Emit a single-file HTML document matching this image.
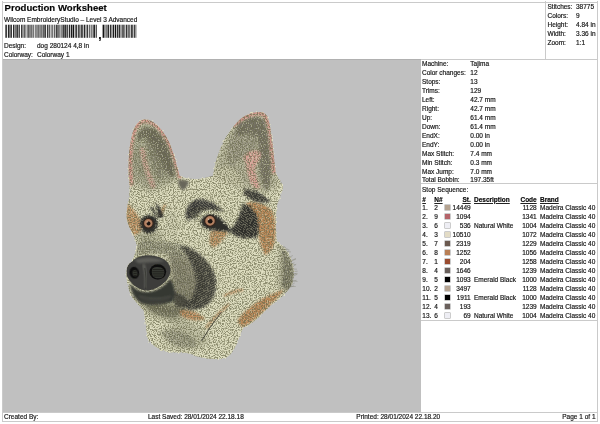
<!DOCTYPE html>
<html><head><meta charset="utf-8"><title>Production Worksheet</title>
<style>
html,body{margin:0;padding:0;background:#fff;}
body{will-change:transform;width:600px;height:424px;position:relative;overflow:hidden;font-family:"Liberation Sans",Arial,sans-serif;font-size:6.5px;color:#111;line-height:9px;-webkit-text-stroke:0.18px #222;}
.abs{position:absolute;white-space:nowrap;}
.ln{position:absolute;background:#cacaca;}
#title{left:4.6px;top:2.2px;font-size:9.6px;font-weight:bold;line-height:12px;color:#000;}
#gray{left:3px;top:59px;width:417.5px;height:353px;background:#c0c0c0;border-top:1px solid #b0b0b0;box-sizing:border-box;}
.row{position:absolute;left:0;height:9px;line-height:9px;white-space:nowrap;}
.row span{position:absolute;top:0;}
u{text-decoration:underline;}
</style></head><body>
<!-- frame lines -->
<div class="ln" style="left:2px;top:2px;width:596px;height:1px"></div>
<div class="ln" style="left:2px;top:1px;width:1px;height:421px"></div>
<div class="ln" style="left:597px;top:1px;width:1px;height:421px"></div>
<div class="ln" style="left:2px;top:421px;width:596px;height:1px"></div>
<div class="ln" style="left:2px;top:59px;width:596px;height:1px"></div>
<div class="ln" style="left:545px;top:1px;width:1px;height:59px"></div>
<div class="ln" style="left:2px;top:412px;width:596px;height:1px"></div>
<div class="ln" style="left:420px;top:183px;width:178px;height:1px"></div>
<div class="ln" style="left:420px;top:320px;width:178px;height:1px"></div>

<div id="gray" class="abs"></div>
<!--DOG-START-->
<svg class="abs" style="left:0;top:0" width="600" height="424" viewBox="0 0 600 424">
<defs>
<filter id="rough" x="-5%" y="-5%" width="110%" height="110%">
  <feTurbulence type="fractalNoise" baseFrequency="0.5" numOctaves="2" seed="3" result="n"/>
  <feDisplacementMap in="SourceGraphic" in2="n" scale="3.5" xChannelSelector="R" yChannelSelector="G"/>
</filter>
<filter id="rough2" x="-10%" y="-10%" width="120%" height="120%">
  <feGaussianBlur stdDeviation="0.9" result="bl"/>
  <feTurbulence type="fractalNoise" baseFrequency="0.6" numOctaves="2" seed="8" result="n"/>
  <feDisplacementMap in="bl" in2="n" scale="4" xChannelSelector="R" yChannelSelector="G"/>
</filter>
<filter id="b05" x="-20%" y="-20%" width="140%" height="140%"><feGaussianBlur stdDeviation="0.45"/></filter>
<filter id="b1" x="-20%" y="-20%" width="140%" height="140%"><feGaussianBlur stdDeviation="0.8"/></filter>
<filter id="b2" x="-20%" y="-20%" width="140%" height="140%"><feGaussianBlur stdDeviation="1.6"/></filter>
<filter id="b3" x="-30%" y="-30%" width="160%" height="160%"><feGaussianBlur stdDeviation="3"/></filter>
<filter id="b5" x="-30%" y="-30%" width="160%" height="160%"><feGaussianBlur stdDeviation="5"/></filter>
<filter id="tex" x="0" y="0" width="100%" height="100%">
  <feTurbulence type="fractalNoise" baseFrequency="0.75" numOctaves="2" seed="11"/>
  <feColorMatrix type="matrix" values="0 0 0 0 0.25  0 0 0 0 0.25  0 0 0 0 0.15  1.8 0 0 0 -0.72"/>
</filter>
<filter id="texl" x="0" y="0" width="100%" height="100%">
  <feTurbulence type="fractalNoise" baseFrequency="0.85" numOctaves="2" seed="23"/>
  <feColorMatrix type="matrix" values="0 0 0 0 0.93  0 0 0 0 0.92  0 0 0 0 0.8  0 1.8 0 0 -0.74"/>
</filter>
<pattern id="st2" width="4" height="3.200" patternUnits="userSpaceOnUse" patternTransform="rotate(-8)">
  <path d="M-0.2,2.200 L2,3.900 L4.200,2.200 M-0.2,-1 L2,0.700 L4.200,-1" fill="none" stroke="#ecebcf" stroke-width="0.900"/>
</pattern>
<pattern id="st" width="4" height="3.200" patternUnits="userSpaceOnUse" patternTransform="rotate(-8)">
  <path d="M-0.2,0.600 L2,2.300 L4.200,0.600" fill="none" stroke="#6a6a4c" stroke-width="1.150"/>
</pattern>
<filter id="spk" x="0" y="0" width="100%" height="100%" color-interpolation-filters="sRGB">
  <feTurbulence type="fractalNoise" baseFrequency="0.75 0.85" numOctaves="1" seed="4"/>
  <feColorMatrix type="matrix" values="0 0 0 0 0.416  0 0 0 0 0.416  0 0 0 0 0.298  7 0 0 0 -3.15"/>
</filter>
<filter id="spl" x="0" y="0" width="100%" height="100%" color-interpolation-filters="sRGB">
  <feTurbulence type="fractalNoise" baseFrequency="0.8 0.7" numOctaves="1" seed="19"/>
  <feColorMatrix type="matrix" values="0 0 0 0 0.86  0 0 0 0 0.86  0 0 0 0 0.74  0 7 0 0 -3.75"/>
</filter>
<filter id="wob" x="0" y="0" width="100%" height="100%">
  <feTurbulence type="fractalNoise" baseFrequency="0.09" numOctaves="2" seed="5" result="n"/>
  <feDisplacementMap in="SourceGraphic" in2="n" scale="9" xChannelSelector="R" yChannelSelector="G"/>
</filter>
<pattern id="h1" width="2.100" height="8" patternUnits="userSpaceOnUse" patternTransform="rotate(62)">
  <rect x="0" y="0" width="0.750" height="8" fill="#a9a78d"/>
</pattern>
<pattern id="h2" width="2.100" height="8" patternUnits="userSpaceOnUse" patternTransform="rotate(-55)">
  <rect x="0" y="0" width="0.700" height="8" fill="#a9a78d"/>
</pattern>
<pattern id="h3" width="1.900" height="8" patternUnits="userSpaceOnUse" patternTransform="rotate(8)">
  <rect x="0" y="0" width="0.700" height="8" fill="#3a3a33"/>
</pattern>
<filter id="rough3" x="-10%" y="-10%" width="120%" height="120%">
  <feTurbulence type="fractalNoise" baseFrequency="0.5" numOctaves="2" seed="14" result="n"/>
  <feDisplacementMap in="SourceGraphic" in2="n" scale="3" xChannelSelector="R" yChannelSelector="G"/>
</filter>
<path id="head" d="M142.500,119.800 C148,118.500 151.500,120.800 154.500,123 C158.500,126 161.800,130 164.500,134 C167.800,139 170.500,144.500 172,150 C174,155 175.600,160 176.500,165 C178,169 178.800,172.500 179.400,175.800 C185,178.500 191,179.300 197,179 C203,178.500 208,177.300 213,175.800 C214,168 216,160 219,152 C221.500,145 224.500,139 228.600,133.300 C232,128 236,123 240.400,119 C244,116 248,114 252,113 C255,112.200 258.500,111.800 261.600,112 C264.500,112.800 266.300,114.500 267.500,116.800 C269.300,122 270.300,127.500 271,133 C272,139.500 272.900,146 273.400,152 C274.200,159 275,166.500 275.800,173.400 C277,176.200 279,178.300 280.500,180.500 C282,183.500 283,187 282.500,190 C281,195 278.500,200 277,205 C276,212 275.800,218 276,225 C276,231 276.200,236 276.700,241 C280.500,244 284.500,248 287.400,252 C290.500,257 292.500,263 293.600,268.700 C294.300,274 293.600,279 292,284 C289.500,288.500 286.500,292.500 282.800,296 C279,299 275,302 271,305.500 C267,309 263,313 259,317 C255,321 250,324.500 243.400,327.500 C242,330 241.300,332 240.600,334 C239.700,336.500 238.700,339 237.700,341.600 C236.300,345 234.800,348 233,351 C231.500,353.500 228.500,357 225,358 C220,359.300 215.500,359.300 211,359 C205.500,358.300 200,357.300 195,356 C192,354.500 189.500,353.500 187,353 C181,352.500 175,352.800 169,352.400 C164.500,351.500 160.500,350 157,348 C153.500,345.800 150.500,343.200 148,340 C146.800,335.500 146.300,330.500 146,326 C145.300,321.500 144.600,316.500 144,312 C143.700,311 143.300,310.200 143,309.500 C140.500,307.500 138.500,305.300 137,303 C134.500,300.500 132.500,298 131,295 C129.500,292 128.500,288.500 128,285 C126.500,281 126.200,277 126.600,273 C126.500,269 127,267 128,265 C129.500,263 131,262 133,261 C133,259.500 133.400,258 133.900,256.700 C135,253.500 136.300,250.300 137.400,247 C136,242.500 134.500,237.500 132.700,233 C130,229 127.800,224 126.800,219 C126.300,213.500 127,208 128,202.500 C128.800,198.500 129.400,194.500 129.600,190.700 C129.500,187 129.200,183.500 129,180 C128.500,175.500 128.300,171.500 128.500,167 C128.500,160.500 128.800,154 129.600,148 C130.500,141 131.800,134.500 133.800,129 C136,124.500 139,121 142.500,119.800 Z"/>
<clipPath id="hc"><use href="#head"/></clipPath>
</defs>

<!-- base fur -->
<g filter="url(#rough)">
  <use href="#head" fill="#e1e0c3"/>
</g>
<g clip-path="url(#hc)">
  <!-- mid olive shading -->
  <g filter="url(#b3)" fill="#8c8b76">
    <!-- left ear overall -->
    <path d="M143,121 C153,120 166,133 173,150 C177,160 179,170 179,178 C172,184 160,186 152,190 C146,180 138,172 131,176 C128,160 130,135 143,121 Z" opacity="0.7"/>
    <path d="M131,150 C136,146 142,150 146,160 C150,170 153,182 153,192 C146,190 138,186 131,184 C129.500,172 129.500,160 131,150 Z" opacity="0.55"/>
    <!-- right ear overall -->
    <path d="M261,113 C268,118 271,135 273,152 C274,165 276,178 278,186 C270,192 256,192 246,188 C236,186 224,182 214,174 C216,160 222,142 232,128 C240,118 252,112 261,113 Z" opacity="0.55"/>
    <!-- muzzle bridge -->
    <path d="M136,246 C146,240 166,240 182,246 C192,250 200,256 204,262 C196,262 184,258 170,256 C158,254 146,254 134,258 Z" opacity="0.5"/>
    <!-- whisker area between nose and crescent -->
    <path d="M168,258 C180,256 198,268 202,284 C204,296 196,304 184,306 C176,300 170,292 170,282 Z" opacity="0.6"/>
    <!-- under lip -->
    <path d="M140,302 C152,300 172,302 186,308 C184,316 176,320 166,318 C156,316 146,312 140,302 Z" opacity="1" fill="#77765f"/>
    <path d="M160,306 C174,308 192,318 210,340 C204,348 196,350 190,346 C182,334 170,322 158,314 Z" opacity="0.4"/>
    <!-- left of mouth -->
    <path d="M127,284 C132,286 138,294 142,304 C136,304 128,296 127,284 Z" opacity="0.7"/>
    <!-- neck hatch -->
    <path d="M160,332 C172,324 190,330 198,346 C188,352 168,350 160,332 Z" opacity="0.55"/>
    <!-- right cheek edge -->
    <path d="M279,247 C290,253 297,270 294,287 C288,294 281,292 279,283 C281,271 281,258 279,247 Z" opacity="0.8" fill="#7a7965"/>
    <!-- left face under eye -->
    <path d="M136,230 C146,235 158,235 166,229 C164,240 150,245 138,242 Z" opacity="0.7"/>
    <!-- forehead between eyes faint -->
    <path d="M170,205 C176,215 178,228 176,240 C170,236 166,222 170,205 Z" opacity="0.25"/>
  </g>
  <!-- darker ear cores -->
  <g filter="url(#b2)" fill="#5a564b">
    <path d="M137,136 C141,128 149,126 156,130 C163,136 168,146 171,156 C174,164 175,172 174,177 C169,178 165,172 162,164 C158,154 153,144 147,139 C143,136 140,138 138,142 Z" opacity="0.8"/>
    <path d="M146,140 C152,142 158,152 162,164 C164,172 164,178 160,180 C156,174 152,164 150,156 C148,150 146,146 146,140 Z" opacity="0.45"/>
    <path d="M238,123 C247,116 258,115 264.500,120 C268,128 269.500,140 270.500,152 C271.500,166 271.500,180 268,191 C263.500,189 261,181 260,171 C259,159 260,147 257,139 C253,133 246,132 240,135 C235,137 234,129 238,123 Z" opacity="0.7"/>
    <path d="M232,134 C240,128 250,130 256,138 C258,146 254,152 248,154 C242,158 236,164 230,168 C226,160 227,144 232,134 Z" opacity="0.3"/>
  </g>
  <!-- light zones in ears -->
  <g filter="url(#b2)" fill="#cfcdb0">
    
    <path d="M214,176 C217,168 222,164 228,166 C236,170 242,178 244,188 C234,186 223,182 214,176 Z" opacity="0.8"/>
  </g>
  <!-- pink -->
  <g filter="url(#b1)" fill="none" stroke="#d48f86" stroke-linecap="round">
    <path d="M131.500,184 C129.500,170 129.800,150 132.500,137 C135,127 138.500,121.800 143.500,120.800 C151,120.300 159,126.500 165,135.500 C170,143.500 174,154 176.500,164 C178,169 179,173 179.500,177" stroke-width="3.600"/>
    <path d="M142.500,150 C144,162 148,174 153,186" stroke-width="5" opacity="0.75" stroke="#d8a197"/>
    <path d="M234,125 C241,118 251,113.500 261,113 C266,114.500 268.500,120 270,130 C271.500,142 272.500,156 274,172" stroke-width="3.800" stroke="#d08f86"/>
  </g>
  <g filter="url(#b1)" fill="#d9a197">
    <path d="M243.500,158 C246,152 253,149.500 260,151.500 C261.500,155 260.500,160 257,163 C255,166 254.500,171 256,176 C257.500,181 259,185 260,189 C256,189.500 252,186 250,181 C247.500,175 246.500,169 246,164 C245.500,161.500 244.500,160 243.500,158 Z"/>
  </g>
  <!-- tan patches -->
  <g filter="url(#b1)" fill="#bd8858">
    <path d="M246,203 C254,200 266,204 273,212 C276,222 276,234 274,244 C272,250 268,254 265,255 C262,250 260,244 259,238 C258,230 257,224 254,218 C251,212 247,208 246,203 Z"/>
    <path d="M211,231 C216,229.500 223,230.500 228,232 C225,238 220,243.500 214,247.500 C210.500,246.500 209,242 209.500,238 Z" opacity="0.9"/>
    <path d="M127,203 C131,206 135,211 138,216 C141,220 143,225 142,229 C140,233 136,235.500 132,235.500 C128,231 125.500,222 126,212 C126.200,209 126.500,206 127,203 Z" opacity="0.85"/>
    <path d="M284,290 C279,297 272,303 266,309 C260,315 253,321 244,327 C241,327 238,324 238,320 C243,312 252,305 262,299 C270,295 278,291 284,290 Z"/>
    <path d="M180,310 C190,309 200,313 205,319 C198,322 188,320 180,315 Z" opacity="0.95"/>
    <path d="M166,203 C165.500,208 163,213 161,216 L159.500,214.500 C161,209 163,205 166,203 Z" opacity="0.9"/>
  </g>
  <g filter="url(#b1)" fill="none" stroke="#bb8656" stroke-width="2.300" opacity="0.95">
    <path d="M224,296 C232,292 238,290 243,290"/>
    <path d="M206,328 C212,320 220,312 229,304"/>
  </g>
  <!-- texture -->
  <rect x="112" y="100" width="200" height="270" filter="url(#spk)" opacity="0.7"/>
  <rect x="112" y="100" width="200" height="270" filter="url(#spl)" opacity="0.5"/>
  <rect x="120" y="105" width="185" height="260" filter="url(#tex)" opacity="0.15"/>
  <path d="M201.500,341 C207,332 213,323 221.500,312" stroke="#2c2c28" stroke-width="0.900" fill="none" opacity="0.85"/>
  <!-- dark patches -->
  <!-- zone between nose and crescent -->
  <g filter="url(#b3)">
    <path d="M166,256 C180,250 200,262 206,280 C208,294 198,306 184,308 C176,302 170,292 170,282 C172,272 170,264 166,256 Z" fill="#66654f" opacity="0.35"/>
    <path d="M137,246 C150,242 170,243 184,248 C176,253 160,253 150,253 C144,253 139,253 135,255 Z" fill="#6f6e58" opacity="0.12"/>
  </g>
  <g filter="url(#rough2)" fill="#2f2f2b">
    <!-- right eyebrow -->
    <path d="M185.500,218 C185,208 190,201 198,199.500 C207,199 216,203 224,212 C218,210 212,209.500 206,210 C199,210.500 193,214 190,221 Z" opacity="0.9"/>
    <!-- around right eye -->
    <path d="M201,220 C204,213.500 214,212.500 219,217 C223,221 228,226.500 233,231.500 C226,231.500 216,230.500 208,229.200 C203,227.500 200,224 201,220 Z"/>
    <path d="M188,213 C192,207 200,205 208,207 C204,210 199,214 197,219 C194,220 190,218 188,213 Z" opacity="0.55"/>
    <!-- crescent right of right eye -->
    <path d="M243,204 C249,204.500 255,210 257.500,218 C259,226 259,233 257,236.500 C251,239 242,238.500 236,236 C233,234.500 231,232.500 230.500,230.500 C234,226 237,221 239,216 C240.500,211.500 241.500,207.500 243,204 Z"/>
    <!-- ear base right -->
    <path d="M244,189 C253,189 263,194 270.500,201.500 C262,204.500 251,201 244,195 Z" opacity="0.92"/>
    <!-- left eye surround -->
    <path d="M140.500,221 C143,213.500 153,213 156.800,219.500 C159.500,225.500 156,232.500 149,233.200 C143,233 138.800,228 140.500,221 Z"/>
    <path d="M155.500,202 C159.500,207 162.300,212 163.500,217 L158.500,218.500 C157.800,213 156.800,208 155.500,202 Z"/>
    <path d="M151,207 C153.500,210.500 155,213 156,216" stroke="#2f2f2b" stroke-width="2" fill="none"/>
    <!-- muzzle crescent -->
    <path d="M180,245.500 C192,246.500 206,257 213,271 C218.500,284 216,298 207,305 C200,310.500 190,311 183,307 C191,300 196.500,292 196.500,282 C196,269 188,257 180,245.500 Z" opacity="0.88"/>
    <path d="M171,290 C177,292 184,296 190,302 C188,307 182,309 176,307 C173,302 171,296 171,290 Z" opacity="0.7"/>
  </g>
  <g filter="url(#rough3)" opacity="0.55">
    <path d="M180,245.500 C192,246.500 206,257 213,271 C218.500,284 216,298 207,305 C200,310.500 190,311 183,307 C191,300 196.500,292 196.500,282 C196,269 188,257 180,245.500 Z" fill="url(#h1)"/>
    <path d="M243,204 C249,204.500 255,210 257.500,218 C259,226 259,233 257,236.500 C251,239 242,238.500 236,236 C233,234.500 231,232.500 230.500,230.500 C234,226 237,221 239,216 C240.500,211.500 241.500,207.500 243,204 Z" fill="url(#h2)"/>
    <path d="M244,189 C253,189 263,194 270.500,201.500 C262,204.500 251,201 244,195 Z" fill="url(#h2)"/>
    <path d="M185.500,218 C185,208 190,201 198,199.500 C207,199 216,203 224,212 C218,210 212,209.500 206,210 C199,210.500 193,214 190,221 Z" fill="url(#h2)"/>
  </g>
  <!-- dark hatch fringes -->
  <g filter="url(#rough3)" opacity="0.7">
    <path d="M168,254 C180,250 196,258 204,272 C208,286 202,300 190,306 C182,302 176,294 174,284 C174,272 172,262 168,254 Z" fill="url(#h3)" opacity="0.55"/>
    <path d="M138,243 C150,239 170,240 184,246 L182,256 C170,252 150,252 136,256 Z" fill="url(#h3)" opacity="0.6"/>
    <path d="M281,249 C290,255 296,270 293,286 C289,292 284,291 282,284 C284,272 284,260 281,249 Z" fill="url(#h3)" opacity="0.8"/>
    <path d="M144,304 C154,302 172,304 184,309 C182,316 174,319 166,317 C156,315 148,311 144,304 Z" fill="url(#h3)" opacity="0.5"/>
    <path d="M161,332 C172,326 190,332 197,345 C188,350 170,348 161,332 Z" fill="url(#h3)" opacity="0.5"/>
  </g>
  <g filter="url(#b1)">
    <!-- forehead spot -->
    <path d="M178,180.500 C182,179.500 187,180.500 189,182 C187.500,186 185,189.500 182.500,190.500 C180,188 178,184.500 178,180.500 Z" fill="#67665a"/>
  </g>
  <!-- mouth -->
  <g filter="url(#b1)">
    <path d="M130,283 C134,289 140,292 148,292 C156,291 164,287 170.500,279 C175,286 176,295 173,301.500 C164,305.500 150,305.500 142,303.500 C136,300.500 131,293 130,283 Z" fill="#363732"/>
    <path d="M139,296.500 C150,299.500 160,299.500 171,296.500" stroke="#676861" stroke-width="0.900" fill="none" opacity="0.8"/>
    <path d="M141,300 C150,302.500 160,302.500 169,300" stroke="#676861" stroke-width="0.700" fill="none" opacity="0.6"/>
  </g>
  <!-- nose -->
  <g>
    <path filter="url(#b05)" d="M126.300,272 C126.300,267 128.500,263.500 131.700,261.200 C135.500,258 140.500,255.600 146,255.200 C152,254.800 158,256.200 162.700,258.600 C167,261 170.300,265 170.600,269.600 C170.800,274.500 168.200,279 164.500,282.600 C160,286.600 154.500,289.800 148.500,290.600 C143,290.800 138,288.600 134.200,285.400 C131.500,283.400 129.600,281 128.400,278.600 C127,276.600 126.400,274.400 126.300,272 Z" fill="#3d3e3a"/>
    <path filter="url(#b1)" d="M134,260 C143,256.300 156,256.500 165,261 C159,262.500 148,262.300 139,263.500 Z" fill="#676862" opacity="0.8"/>
    <ellipse cx="134.300" cy="272.700" rx="4.800" ry="6" fill="#0e0f0c" filter="url(#b05)" transform="rotate(-12 134.300 272.700)"/>
    <ellipse cx="157.800" cy="271.800" rx="8.400" ry="7.600" fill="#0e0f0c" filter="url(#b05)"/>
    <ellipse cx="135" cy="273.300" rx="2.500" ry="3.300" fill="#33342f" filter="url(#b05)" transform="rotate(-12 135 273.300)"/>
    <path d="M152.500,268.500 C155.500,266.300 161.500,266.500 163.800,269.500 C165,272 164.500,275.500 162.300,277.500 C158.500,279 154.500,278.500 152.800,276 C151.500,273.800 151.500,270.800 152.500,268.500 Z" fill="#363732" filter="url(#b05)"/>
    <path d="M152.800,269.500 h11 M152.300,271.700 h12 M152.500,273.900 h11.600 M153.500,276.100 h9 M133.500,271.500 h3 M133.500,273.500 h3.200 M134,275.500 h2.400" stroke="#1a1b16" stroke-width="0.750" fill="none" opacity="0.9"/>
    <path filter="url(#b1)" d="M143.500,264 C145.500,271 146.500,280 145.800,288.500" stroke="#73746d" stroke-width="2.400" fill="none" opacity="0.75"/>
    <path d="M144.800,268 C146,275 146.300,282 145.800,289" stroke="#23241f" stroke-width="0.700" fill="none" opacity="0.8"/>
  </g>
  <!-- eyes -->
  <g>
    <circle cx="148.300" cy="223.300" r="4.900" fill="#a8775a"/>
    <circle cx="148.300" cy="223.300" r="4.900" fill="none" stroke="#33261e" stroke-width="1.300"/>
    <circle cx="148.300" cy="223.300" r="2.900" fill="none" stroke="#cf9a76" stroke-width="0.800" opacity="0.5"/>
    <circle cx="148.600" cy="223.500" r="1.900" fill="#1c1410"/>
    <circle cx="210" cy="220.900" r="5.500" fill="#aa795b"/>
    <circle cx="210" cy="220.900" r="5.500" fill="none" stroke="#33261e" stroke-width="1.400"/>
    <circle cx="210" cy="220.900" r="3.500" fill="none" stroke="#cf9a76" stroke-width="0.900" opacity="0.5"/>
    <circle cx="210.200" cy="221.200" r="2.300" fill="#1c1410"/>
    <circle cx="208.600" cy="219.200" r="0.800" fill="#f0d8c0" opacity="0.8"/>
    <circle cx="147.200" cy="221.900" r="0.700" fill="#f0d8c0" opacity="0.8"/>
  </g>
</g>
<!-- fringe -->
<path d="M278.6,248.3 L285.9,247.4 M277.1,246.9 L284.9,246.7 M282.3,248.8 L289.4,249.8 M281.6,250.2 L287.5,248.8 M284.1,254.2 L289.0,250.8 M285.1,251.9 L291.0,251.9 M285.5,258.1 L291.3,257.4 M287.5,258.1 L292.9,255.5 M288.6,261.5 L295.9,258.6 M288.9,262.4 L296.0,259.0 M289.5,264.0 L295.7,264.6 M289.4,265.3 L294.4,262.6 M290.3,268.4 L296.2,264.3 M290.2,268.9 L296.9,269.2 M292.0,271.6 L297.6,271.2 M290.0,273.9 L297.6,273.7 M289.8,275.6 L296.4,273.4 M290.2,277.8 L297.2,274.2 M289.7,280.6 L297.5,281.5 M289.2,281.7 L296.5,280.3 M288.1,286.3 L295.7,286.5 M289.2,286.3 L294.7,283.0 M286.6,288.4 L293.9,285.8 M285.7,287.9 L291.2,285.8" stroke="#6b6a56" stroke-width="0.600" fill="none" opacity="0.5"/>
</svg>
<!--DOG-END-->

<div id="title" class="abs">Production Worksheet</div>
<div class="abs" style="left:4px;top:14.5px">Wilcom EmbroideryStudio – Level 3 Advanced</div>
<!--BARCODE--><svg class="abs" style="left:0;top:0" width="150" height="45" viewBox="0 0 150 45"><rect x="5.40" y="24.7" width="1.40" height="13.1" fill="#111"/><rect x="7.90" y="24.7" width="1.70" height="13.1" fill="#262626"/><rect x="10.30" y="24.7" width="1.70" height="13.1" fill="#3a3a3a"/><rect x="13.10" y="24.7" width="1.00" height="13.1" fill="#111"/><rect x="14.60" y="24.7" width="1.00" height="13.1" fill="#1c1c1c"/><rect x="16.30" y="24.7" width="1.70" height="13.1" fill="#3a3a3a"/><rect x="18.50" y="24.7" width="1.40" height="13.1" fill="#3a3a3a"/><rect x="21.00" y="24.7" width="1.00" height="13.1" fill="#3a3a3a"/><rect x="22.50" y="24.7" width="0.80" height="13.1" fill="#1c1c1c"/><rect x="23.80" y="24.7" width="1.00" height="13.1" fill="#3a3a3a"/><rect x="25.50" y="24.7" width="0.80" height="13.1" fill="#333"/><rect x="27.40" y="24.7" width="1.40" height="13.1" fill="#3a3a3a"/><rect x="29.50" y="24.7" width="1.00" height="13.1" fill="#111"/><rect x="31.40" y="24.7" width="0.80" height="13.1" fill="#111"/><rect x="32.70" y="24.7" width="1.00" height="13.1" fill="#3a3a3a"/><rect x="34.80" y="24.7" width="0.80" height="13.1" fill="#333"/><rect x="36.50" y="24.7" width="1.00" height="13.1" fill="#1c1c1c"/><rect x="38.40" y="24.7" width="0.80" height="13.1" fill="#111"/><rect x="39.70" y="24.7" width="0.80" height="13.1" fill="#111"/><rect x="41.40" y="24.7" width="0.80" height="13.1" fill="#1c1c1c"/><rect x="42.70" y="24.7" width="1.00" height="13.1" fill="#1c1c1c"/><rect x="44.40" y="24.7" width="1.40" height="13.1" fill="#111"/><rect x="46.90" y="24.7" width="1.40" height="13.1" fill="#3a3a3a"/><rect x="48.80" y="24.7" width="1.00" height="13.1" fill="#333"/><rect x="50.70" y="24.7" width="0.80" height="13.1" fill="#333"/><rect x="52.40" y="24.7" width="0.80" height="13.1" fill="#1c1c1c"/><rect x="54.30" y="24.7" width="1.00" height="13.1" fill="#1c1c1c"/><rect x="56.00" y="24.7" width="0.80" height="13.1" fill="#111"/><rect x="57.30" y="24.7" width="1.40" height="13.1" fill="#3a3a3a"/><rect x="59.40" y="24.7" width="1.00" height="13.1" fill="#3a3a3a"/><rect x="61.50" y="24.7" width="1.00" height="13.1" fill="#111"/><rect x="63.20" y="24.7" width="1.40" height="13.1" fill="#111"/><rect x="65.10" y="24.7" width="1.40" height="13.1" fill="#1c1c1c"/><rect x="67.20" y="24.7" width="1.00" height="13.1" fill="#1c1c1c"/><rect x="69.10" y="24.7" width="1.00" height="13.1" fill="#111"/><rect x="70.80" y="24.7" width="1.70" height="13.1" fill="#1c1c1c"/><rect x="73.00" y="24.7" width="1.00" height="13.1" fill="#111"/><rect x="74.70" y="24.7" width="1.00" height="13.1" fill="#3a3a3a"/><rect x="76.20" y="24.7" width="1.00" height="13.1" fill="#111"/><rect x="78.10" y="24.7" width="0.80" height="13.1" fill="#1c1c1c"/><rect x="79.40" y="24.7" width="1.00" height="13.1" fill="#1c1c1c"/><rect x="81.10" y="24.7" width="1.70" height="13.1" fill="#333"/><rect x="83.70" y="24.7" width="1.70" height="13.1" fill="#262626"/><rect x="86.50" y="24.7" width="1.70" height="13.1" fill="#3a3a3a"/><rect x="89.30" y="24.7" width="1.00" height="13.1" fill="#262626"/><rect x="91.40" y="24.7" width="1.00" height="13.1" fill="#262626"/><rect x="93.30" y="24.7" width="1.70" height="13.1" fill="#262626"/><rect x="95.70" y="24.7" width="1.00" height="13.1" fill="#111"/><rect x="102.60" y="24.7" width="1.40" height="13.1" fill="#111"/><rect x="104.50" y="24.7" width="0.80" height="13.1" fill="#1c1c1c"/><rect x="105.80" y="24.7" width="0.80" height="13.1" fill="#262626"/><rect x="107.50" y="24.7" width="1.40" height="13.1" fill="#111"/><rect x="109.80" y="24.7" width="1.70" height="13.1" fill="#333"/><rect x="112.60" y="24.7" width="1.70" height="13.1" fill="#1c1c1c"/><rect x="115.00" y="24.7" width="1.00" height="13.1" fill="#111"/><rect x="116.70" y="24.7" width="1.70" height="13.1" fill="#333"/><rect x="118.90" y="24.7" width="1.00" height="13.1" fill="#1c1c1c"/><rect x="120.60" y="24.7" width="0.80" height="13.1" fill="#111"/><rect x="122.30" y="24.7" width="1.40" height="13.1" fill="#1c1c1c"/><rect x="124.40" y="24.7" width="0.80" height="13.1" fill="#333"/><rect x="125.90" y="24.7" width="1.00" height="13.1" fill="#1c1c1c"/><rect x="127.60" y="24.7" width="1.00" height="13.1" fill="#111"/><rect x="129.30" y="24.7" width="1.00" height="13.1" fill="#3a3a3a"/><rect x="131.00" y="24.7" width="0.80" height="13.1" fill="#111"/><rect x="132.30" y="24.7" width="1.00" height="13.1" fill="#1c1c1c"/><rect x="134.20" y="24.7" width="0.80" height="13.1" fill="#111"/><rect x="135.50" y="24.7" width="0.80" height="13.1" fill="#333"/></svg>
<div id="comma" class="abs" style="left:98.2px;top:28.9px;font-size:12px;font-weight:bold;color:#000;line-height:12px">,</div><!--/BARCODE-->
<div class="abs" style="left:4px;top:40.5px">Design:</div>
<div class="abs" style="left:37px;top:40.5px">dog 280124 4,8 in</div>
<div class="abs" style="left:4px;top:49.5px">Colorway:</div>
<div class="abs" style="left:37px;top:49.5px">Colorway 1</div>

<!-- stats -->
<div class="abs" style="left:547.5px;top:1.6px;line-height:9px">Stitches:<br>Colors:<br>Height:<br>Width:<br>Zoom:</div>
<div class="abs" style="left:576px;top:1.6px;line-height:9px">38775<br>9<br>4.84 in<br>3.36 in<br>1:1</div>

<!-- machine info -->
<div class="abs" style="left:422px;top:59px;line-height:9px">Machine:<br>Color changes:<br>Stops:<br>Trims:<br>Left:<br>Right:<br>Up:<br>Down:<br>EndX:<br>EndY:<br>Max Stitch:<br>Min Stitch:<br>Max Jump:</div>
<div class="abs" style="left:422px;top:174.7px">Total Bobbin:</div>
<div class="abs" style="left:470.3px;top:59px;line-height:9px">Tajima<br>12<br>13<br>129<br>42.7 mm<br>42.7 mm<br>61.4 mm<br>61.4 mm<br>0.00 in<br>0.00 in<br>7.4 mm<br>0.3 mm<br>7.0 mm</div>
<div class="abs" style="left:470.3px;top:174.7px">197.35ft</div>

<div class="abs" style="left:422px;top:185px">Stop Sequence:</div>
<div id="seq">
<div class="row" style="top:194.5px;font-weight:bold;color:#000"><span style="left:422.3px"><u>#</u></span><span style="left:434.3px"><u>N#</u></span><span style="right:-470.7px"><u>St.</u></span><span style="left:474px"><u>Description</u></span><span style="right:-536.7px"><u>Code</u></span><span style="left:540px"><u>Brand</u></span></div>
<div class="row" style="top:203px"><span style="left:422.3px">1.</span><span style="left:434.3px">2</span><span style="left:445px;top:1.5px;width:5px;height:5.5px;background:#b5a391;box-shadow:0 0 0 0.5px #999"></span><span style="right:-470.7px">14449</span><span style="left:474px"></span><span style="right:-536.7px">1128</span><span style="left:540px">Madeira Classic 40</span></div>
<div class="row" style="top:212px"><span style="left:422.3px">2.</span><span style="left:434.3px">9</span><span style="left:445px;top:1.5px;width:5px;height:5.5px;background:#b5646a;box-shadow:0 0 0 0.5px #999"></span><span style="right:-470.7px">1094</span><span style="left:474px"></span><span style="right:-536.7px">1341</span><span style="left:540px">Madeira Classic 40</span></div>
<div class="row" style="top:221px"><span style="left:422.3px">3.</span><span style="left:434.3px">6</span><span style="left:445px;top:1.5px;width:5px;height:5.5px;background:#eeeef4;box-shadow:0 0 0 0.5px #999"></span><span style="right:-470.7px">536</span><span style="left:474px">Natural White</span><span style="right:-536.7px">1004</span><span style="left:540px">Madeira Classic 40</span></div>
<div class="row" style="top:230px"><span style="left:422.3px">4.</span><span style="left:434.3px">3</span><span style="left:445px;top:1.5px;width:5px;height:5.5px;background:#e3dcc6;box-shadow:0 0 0 0.5px #999"></span><span style="right:-470.7px">10510</span><span style="left:474px"></span><span style="right:-536.7px">1072</span><span style="left:540px">Madeira Classic 40</span></div>
<div class="row" style="top:239px"><span style="left:422.3px">5.</span><span style="left:434.3px">7</span><span style="left:445px;top:1.5px;width:5px;height:5.5px;background:#6b5a50;box-shadow:0 0 0 0.5px #999"></span><span style="right:-470.7px">2319</span><span style="left:474px"></span><span style="right:-536.7px">1229</span><span style="left:540px">Madeira Classic 40</span></div>
<div class="row" style="top:248px"><span style="left:422.3px">6.</span><span style="left:434.3px">8</span><span style="left:445px;top:1.5px;width:5px;height:5.5px;background:#b97f55;box-shadow:0 0 0 0.5px #999"></span><span style="right:-470.7px">1252</span><span style="left:474px"></span><span style="right:-536.7px">1056</span><span style="left:540px">Madeira Classic 40</span></div>
<div class="row" style="top:257px"><span style="left:422.3px">7.</span><span style="left:434.3px">1</span><span style="left:445px;top:1.5px;width:5px;height:5.5px;background:#9a4c30;box-shadow:0 0 0 0.5px #999"></span><span style="right:-470.7px">204</span><span style="left:474px"></span><span style="right:-536.7px">1258</span><span style="left:540px">Madeira Classic 40</span></div>
<div class="row" style="top:266px"><span style="left:422.3px">8.</span><span style="left:434.3px">4</span><span style="left:445px;top:1.5px;width:5px;height:5.5px;background:#6a605c;box-shadow:0 0 0 0.5px #999"></span><span style="right:-470.7px">1646</span><span style="left:474px"></span><span style="right:-536.7px">1239</span><span style="left:540px">Madeira Classic 40</span></div>
<div class="row" style="top:275px"><span style="left:422.3px">9.</span><span style="left:434.3px">5</span><span style="left:445px;top:1.5px;width:5px;height:5.5px;background:#000000;box-shadow:0 0 0 0.5px #999"></span><span style="right:-470.7px">1093</span><span style="left:474px">Emerald Black</span><span style="right:-536.7px">1000</span><span style="left:540px">Madeira Classic 40</span></div>
<div class="row" style="top:284px"><span style="left:422.3px">10.</span><span style="left:434.3px">2</span><span style="left:445px;top:1.5px;width:5px;height:5.5px;background:#b5a391;box-shadow:0 0 0 0.5px #999"></span><span style="right:-470.7px">3497</span><span style="left:474px"></span><span style="right:-536.7px">1128</span><span style="left:540px">Madeira Classic 40</span></div>
<div class="row" style="top:293px"><span style="left:422.3px">11.</span><span style="left:434.3px">5</span><span style="left:445px;top:1.5px;width:5px;height:5.5px;background:#000000;box-shadow:0 0 0 0.5px #999"></span><span style="right:-470.7px">1911</span><span style="left:474px">Emerald Black</span><span style="right:-536.7px">1000</span><span style="left:540px">Madeira Classic 40</span></div>
<div class="row" style="top:302px"><span style="left:422.3px">12.</span><span style="left:434.3px">4</span><span style="left:445px;top:1.5px;width:5px;height:5.5px;background:#6a605c;box-shadow:0 0 0 0.5px #999"></span><span style="right:-470.7px">193</span><span style="left:474px"></span><span style="right:-536.7px">1239</span><span style="left:540px">Madeira Classic 40</span></div>
<div class="row" style="top:311px"><span style="left:422.3px">13.</span><span style="left:434.3px">6</span><span style="left:445px;top:1.5px;width:5px;height:5.5px;background:#eeeef4;box-shadow:0 0 0 0.5px #999"></span><span style="right:-470.7px">69</span><span style="left:474px">Natural White</span><span style="right:-536.7px">1004</span><span style="left:540px">Madeira Classic 40</span></div>
</div>

<!-- footer -->
<div class="abs" style="left:4px;top:411.6px">Created By:</div>
<div class="abs" style="left:148px;top:411.6px">Last Saved: 28/01/2024 22.18.18</div>
<div class="abs" style="left:356.3px;top:411.6px">Printed: 28/01/2024 22.18.20</div>
<div class="abs" style="right:4.5px;top:411.6px">Page 1 of 1</div>
</body></html>
